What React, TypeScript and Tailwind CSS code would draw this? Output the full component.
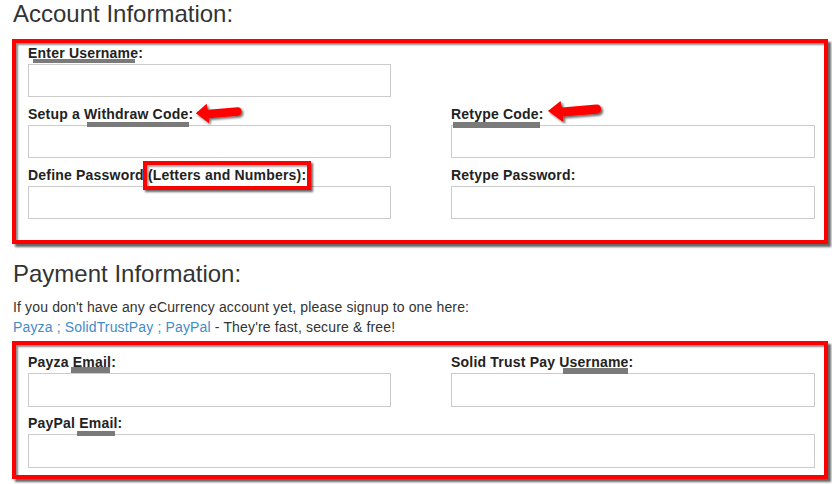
import React from 'react';

const font = "font-['Liberation_Sans',Arial,sans-serif]";
const redBox =
  'border-4 border-[#f00] shadow-[3px_3px_2px_rgba(0,0,0,0.6),inset_2px_2px_2px_rgba(0,0,0,0.45)]';

const Arrow: React.FC<{ className: string; id: string }> = ({ className, id }) => (
  <svg className={className} viewBox="0 0 60 26" preserveAspectRatio="none">
    <defs>
      <filter id={id} x="-20%" y="-30%" width="140%" height="170%">
        <feDropShadow dx="2" dy="2" stdDeviation="1" floodColor="#000" floodOpacity="0.6" />
      </filter>
    </defs>
    <path
      d="M1 12 L14 1 L15.5 8 L51 5 C57 4.5 58 14 52 15 L16.5 18 L17 24 Z"
      fill="#f00"
      filter={`url(#${id})`}
    />
  </svg>
);

type FieldProps = {
  label: React.ReactNode;
  bar?: string;
  inputH: string;
  className?: string;
  children?: React.ReactNode;
};

const Field: React.FC<FieldProps> = ({ label, bar, inputH, className, children }) => (
  <div className={`flex flex-col ${className ?? ''}`}>
    <div className="relative h-4 mb-[3px] text-[14px] tracking-[0.2px] font-bold leading-4 text-[#222]">
      {bar && <span className={`absolute bg-[#7a7a7a] ${bar}`} />}
      <span className="relative whitespace-nowrap">{label}</span>
      {children}
    </div>
    <input type="text" className={`w-full ${inputH} border border-[#cbcbcb] bg-white outline-none`} />
  </div>
);

export default function App() {
  return (
    <div className={`w-[832px] h-[484px] overflow-hidden bg-white text-[#333] ${font}`}>
      <h3 className="pl-[13px] pt-px text-[24px] leading-[26px] font-normal text-[#333]">Account Information:</h3>

      <div className={`ml-[12px] mt-[12px] w-[816px] ${redBox} pl-[12px] pr-[9px] pt-[2px] pb-[21px]`}>
        <div className="grid grid-cols-[363px_364px] gap-x-[60px] gap-y-[9px]">
          <Field label="Enter Username:" bar="left-[5px] top-[14px] w-[102px] h-[4px]" inputH="h-[33px]" />
          <div />
          <Field label="Setup a Withdraw Code:" bar="left-[59px] top-[16px] w-[102px] h-[5px]" inputH="h-[33px]">
            <Arrow id="arr1" className="absolute left-[167px] top-[-3px] w-[50px] h-[22px]" />
          </Field>
          <Field label="Retype Code:" bar="left-[2px] top-[16px] w-[87px] h-[6px]" inputH="h-[33px]">
            <Arrow id="arr2" className="absolute left-[96px] top-[-6px] w-[58px] h-[24px]" />
          </Field>
          <Field label="Define Password (Letters and Numbers):" inputH="h-[33px]">
            <span className="absolute left-[115px] top-[-6px] w-[168px] h-[29px] border-4 border-[#f00] shadow-[2px_2px_2px_rgba(0,0,0,0.6),inset_2px_2px_2px_rgba(0,0,0,0.35)]" />
          </Field>
          <Field label="Retype Password:" inputH="h-[33px]" />
        </div>
      </div>

      <h3 className="pl-[13px] mt-[17px] text-[24px] leading-[26px] font-normal text-[#333]">Payment Information:</h3>
      <p className="pl-[13px] mt-[10px] text-[14px] tracking-[0.15px] leading-5 text-[#333]">
        If you don't have any eCurrency account yet, please signup to one here:
        <br />
        <a className="text-[#428bca]">Payza</a>
        <span className="text-[#428bca]"> ; </span>
        <a className="text-[#428bca]">SolidTrustPay</a>
        <span className="text-[#428bca]"> ; </span>
        <a className="text-[#428bca]">PayPal</a> - They're fast, secure &amp; free!
      </p>

      <div className={`ml-[12px] mt-[4px] w-[816px] ${redBox} pl-[12px] pr-[9px] pt-[9px] pb-[7px]`}>
        <div className="grid grid-cols-[363px_364px] gap-x-[60px] gap-y-[8px]">
          <Field label="Payza Email:" bar="left-[43px] top-[13px] w-[39px] h-[6px]" inputH="h-[34px]" />
          <Field label="Solid Trust Pay Username:" bar="left-[112px] top-[14px] w-[65px] h-[6px]" inputH="h-[34px]" />
          <Field
            label="PayPal Email:"
            bar="left-[49px] top-[16px] w-[38px] h-[5px]"
            inputH="h-[34px]"
            className="col-span-2"
          />
        </div>
      </div>
    </div>
  );
}
